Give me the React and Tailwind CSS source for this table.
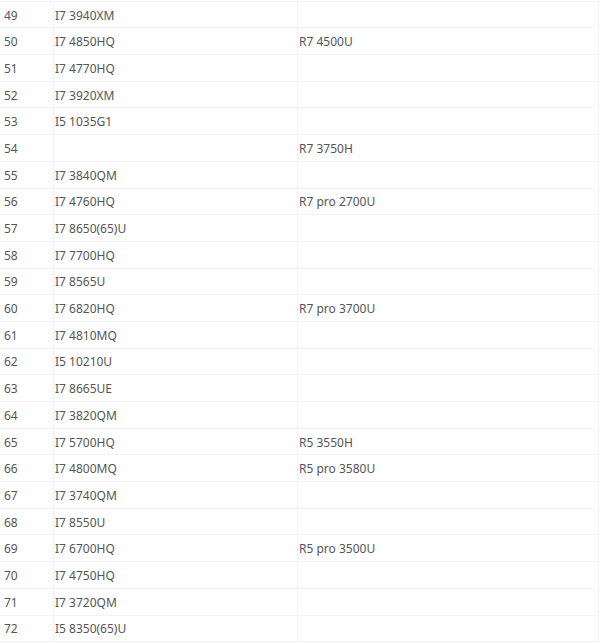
const rows = [
  [49, "I7 3940XM", ""],
  [50, "I7 4850HQ", "R7 4500U"],
  [51, "I7 4770HQ", ""],
  [52, "I7 3920XM", ""],
  [53, "I5 1035G1", ""],
  [54, "", "R7 3750H"],
  [55, "I7 3840QM", ""],
  [56, "I7 4760HQ", "R7 pro 2700U"],
  [57, "I7 8650(65)U", ""],
  [58, "I7 7700HQ", ""],
  [59, "I7 8565U", ""],
  [60, "I7 6820HQ", "R7 pro 3700U"],
  [61, "I7 4810MQ", ""],
  [62, "I5 10210U", ""],
  [63, "I7 8665UE", ""],
  [64, "I7 3820QM", ""],
  [65, "I7 5700HQ", "R5 3550H"],
  [66, "I7 4800MQ", "R5 pro 3580U"],
  [67, "I7 3740QM", ""],
  [68, "I7 8550U", ""],
  [69, "I7 6700HQ", "R5 pro 3500U"],
  [70, "I7 4750HQ", ""],
  [71, "I7 3720QM", ""],
  [72, "I5 8350(65)U", ""],
];

export default function App() {
  return (
    <div
      className="w-[600px] h-[643px] overflow-hidden bg-white pt-[0.7px] text-[12px] text-[#555]"
      style={{ fontFamily: '"Noto Sans", "Open Sans", sans-serif' }}
    >
      <div className="w-[599px] border-t border-r border-[#f3f3f3]">
        {rows.map(([n, a, b]) => (
          <div key={n} className="flex h-[26.7px] border-b border-[#f3f3f3]">
            <div className="w-[54px] pl-[4px] pt-[2px] border-r border-[#f3f3f3] flex items-center">{n}</div>
            <div className="w-[244px] pl-[1px] pt-[2px] border-r border-[#f3f3f3] flex items-center">{a}</div>
            <div className="flex-1 pl-[1px] pt-[2px] flex items-center">{b}</div>
          </div>
        ))}
      </div>
    </div>
  );
}
